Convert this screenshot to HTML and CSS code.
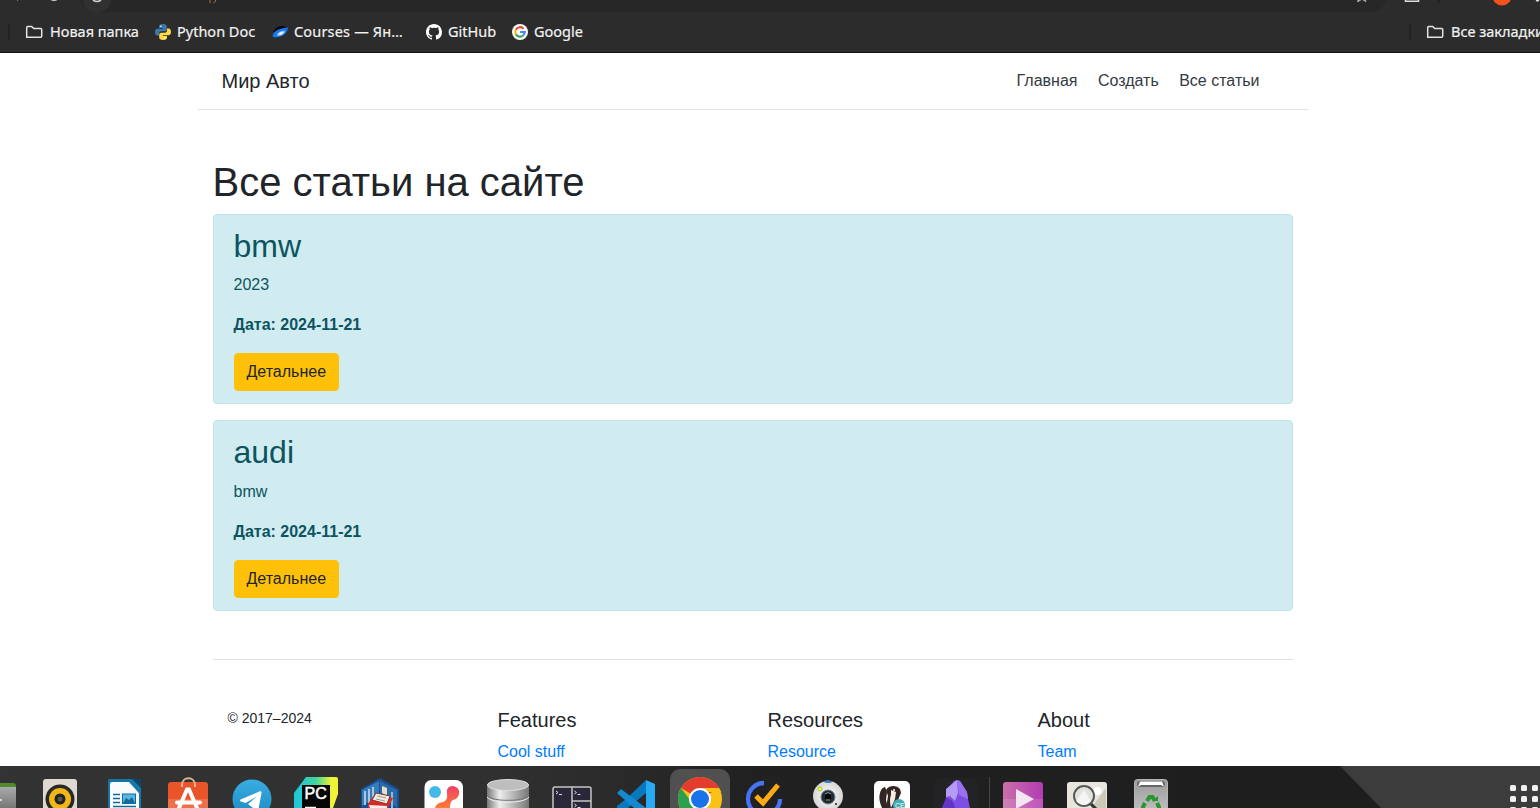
FILE: index.html
```html
<!DOCTYPE html>
<html lang="ru">
<head>
<meta charset="utf-8">
<title>Мир Авто</title>
<link rel="stylesheet" href="styles.css">
</head>
<body>
<div class="toolbar">
  <svg width="1540" height="12" viewBox="0 0 1540 12">
    <path d="M80 0H1386Q1382 12 1368 12H102Q84 12 80 0Z" fill="#272727"/>
    <path d="M83 0a14 12 0 0 0 28 0z" fill="#303030"/>
    <path d="M93 0q4 3 8 0" fill="none" stroke="#d0d0d0" stroke-width="1.6"/>
    <path d="M51 0q3 1.400 6 0" fill="#ddd" stroke="#ddd" stroke-width=".6"/>
    <path d="M17.500 0v1" stroke="#777"/>
    <path d="M210 0v3M215.500 0v1.500l-2 1.500" stroke="#a2714d" fill="none"/>
    <path d="M1357.500 2l1-3M1366 2l-1-3M1358 1.500l4-2.500 4 2.500" stroke="#aaa" stroke-width="1.100" fill="none"/>
    <path d="M1405.500 0v1.200h13V0" stroke="#ddd" stroke-width="1.600" fill="none"/>
    <path d="M1438.500 0v3" stroke="#202020" stroke-width="2"/>
    <circle cx="1502" cy="-4" r="9.500" fill="#f4511e"/>
    <circle cx="1537.500" cy="0" r="1.800" fill="#ddd"/>
  </svg>
</div>
<div class="bookmarks">
  <i class="divider"></i>
  <span class="mark folder"><svg width="18" height="16" viewBox="0 0 18 16"><path d="M1.700 13.200V3.500q0-1 1-1h4l2 2h7q1 0 1 1v6.700q0 1-1 1h-13z" fill="none" stroke="#e3e3e3" stroke-width="1.500"/></svg><b class="t1">Новая папка</b></span>
  <span class="mark python"><svg width="16" height="16" viewBox="0 0 16 16"><path d="M7.800 0C4.800 0 4 1.200 4 2.500V4h4v.8H2.300C.8 4.800 0 6.200 0 8s.8 3.500 2.200 3.500H4V9.600c0-1.300 1-2.300 2.300-2.300h3.600c1 0 1.900-.8 1.900-1.900V2.500C11.800 1 10.600 0 7.800 0z" fill="#3d78aa"/><path d="M8.200 16c3 0 3.800-1.200 3.800-2.500V12H8v-.8h5.700c1.500 0 2.300-1.400 2.300-3.200s-.8-3.500-2.200-3.500H12v1.900c0 1.300-1 2.300-2.300 2.300H6.100c-1 0-1.900.8-1.900 1.900v2.900C4.200 15 5.400 16 8.200 16z" fill="#ffd945"/><circle cx="5.900" cy="2.200" r=".8" fill="#fff"/><circle cx="10" cy="13.800" r=".8" fill="#fff"/></svg><b class="t2">Python Doc</b></span>
  <span class="mark courses"><svg width="17" height="16" viewBox="0 0 17 16"><defs><radialGradient id="ya"><stop offset=".2" stop-color="#fff"/><stop offset="1" stop-color="#1479ef"/></radialGradient></defs><path d="M1 8Q4 2 10 2q4 0 5 3z" fill="#060606"/><path d="M16 3.500Q16 9.500 8 12.500 1 14.500 .5 12 2 6.500 8 5 12 3.500 16 3.500z" fill="#1479ef"/><ellipse cx="9" cy="9.300" rx="5.500" ry="2.400" transform="rotate(-27 9 9.300)" fill="url(#ya)"/></svg><b class="t3">Courses — Ян…</b></span>
  <span class="mark github"><svg width="16" height="16" viewBox="0 0 16 16"><path fill="#fff" d="M8 0C3.580 0 0 3.580 0 8c0 3.540 2.290 6.530 5.470 7.590.4.070.55-.17.55-.38 0-.19-.01-.82-.01-1.490-2.010.37-2.530-.49-2.690-.94-.09-.23-.48-.94-.82-1.130-.28-.15-.68-.52-.01-.53.63-.01 1.080.58 1.230.82.72 1.210 1.870.87 2.330.66.07-.52.28-.87.51-1.070-1.780-.2-3.640-.89-3.640-3.950 0-.87.31-1.590.82-2.150-.08-.2-.36-1.020.08-2.120 0 0 .67-.21 2.200.82.64-.18 1.320-.27 2-.27s1.360.09 2 .27c1.530-1.040 2.200-.82 2.200-.82.44 1.100.16 1.920.08 2.120.51.56.82 1.270.82 2.150 0 3.070-1.870 3.750-3.650 3.950.29.25.54.73.54 1.480 0 1.070-.01 1.930-.01 2.200 0 .21.15.46.55.38A8.010 8.010 0 0 0 16 8c0-4.420-3.580-8-8-8z"/></svg><b class="t4">GitHub</b></span>
  <span class="mark google"><svg width="16" height="16" viewBox="0 0 16 16"><circle cx="8" cy="8" r="8" fill="#fff"/><g fill="none" stroke-width="2.200"><path d="M11.500 4.700A4.700 4.700 0 0 0 3.900 5.700" stroke="#ea4335"/><path d="M3.900 5.700a4.700 4.700 0 0 0 0 4.600" stroke="#fbbc05"/><path d="M3.900 10.300a4.700 4.700 0 0 0 7.200 1.200" stroke="#34a853"/><path d="M11.100 11.500a4.700 4.700 0 0 0 1.600-3.500H8.200" stroke="#4285f4"/></g></svg><b class="t5">Google</b></span>
  <i class="divider last"></i>
  <span class="mark folder"><svg width="18" height="16" viewBox="0 0 18 16"><path d="M1.700 13.200V3.500q0-1 1-1h4l2 2h7q1 0 1 1v6.700q0 1-1 1h-13z" fill="none" stroke="#e3e3e3" stroke-width="1.500"/></svg><b class="t6">Все закладки</b></span>
</div>

<main class="page">
  <div class="container">
    <header class="site-header">
      <h5 class="brand">Мир Авто</h5>
      <nav class="site-nav">
        <a>Главная</a>
        <a>Создать</a>
        <a>Все статьи</a>
      </nav>
    </header>
    <div class="content">
      <h1>Все статьи на сайте</h1>
      <section class="alert">
        <h2>bmw</h2>
        <p>2023</p>
        <p><strong>Дата: 2024-11-21</strong></p>
        <a class="btn">Детальнее</a>
      </section>
      <section class="alert">
        <h2>audi</h2>
        <p>bmw</p>
        <p><strong>Дата: 2024-11-21</strong></p>
        <a class="btn">Детальнее</a>
      </section>
      <footer class="site-footer">
        <div class="copyright">© 2017–2024</div>
        <div><h5>Features</h5><a>Cool stuff</a></div>
        <div><h5>Resources</h5><a>Resource</a></div>
        <div><h5>About</h5><a>Team</a></div>
      </footer>
    </div>
  </div>
</main>

<div class="dock">
  <svg class="app" viewBox="0 0 64 42"><defs><linearGradient id="gr" x2="0" y2="1"><stop stop-color="#aaa"/><stop offset="1" stop-color="#777"/></linearGradient></defs><rect x="12" y="17" width="40" height="30" rx="3" fill="#4f8a2b"/><path d="M12 42V25h16l4-4h20v21z" fill="url(#gr)"/><path d="M34 34h4" stroke="#eee" stroke-width="1.500"/></svg>
  <svg class="app" viewBox="0 0 64 42"><rect x="15" y="13" width="34" height="40" rx="3" fill="#dedad2"/><circle cx="32" cy="33" r="14.500" fill="#282828"/><circle cx="32" cy="33" r="11" fill="#f1b717"/><circle cx="32" cy="33" r="5.500" fill="#222"/><circle cx="32" cy="33" r="2.500" fill="#555"/></svg>
  <svg class="app" viewBox="0 0 64 42"><path d="M16 42V15q0-2 2-2h31v29z" fill="#1474a8"/><path d="M18 42V18q0-2 2-2h17l10 11v15z" fill="#f7fafb"/><path d="M36 13h13v29h-2V27z" fill="#1679aa"/><path d="M40 13h9v9z" fill="#0d4668"/><path d="M21 28.500h7M21 32.500h7M21 36.500h7M21 40.500h23" stroke="#146b9a" stroke-width="1.500"/><rect x="30.500" y="28" width="13" height="9.500" fill="#58b8e5" stroke="#146b9a"/><path d="M31 37l3-5 3 2 3-3 3 6z" fill="#146b9a"/></svg>
  <svg class="app" viewBox="0 0 64 42"><rect x="12" y="16" width="40" height="40" rx="3" fill="#e95529"/><path d="M12 33h40v9H12z" fill="#ee704b"/><path d="M26 21v-2c0-9 13-9 13 0v2" fill="none" stroke="#ddb594" stroke-width="2"/><path d="M21 36.500h23M23 42l8-18.500h2L41 42" fill="none" stroke="#fff" stroke-width="4" stroke-linecap="round"/></svg>
  <svg class="app" viewBox="0 0 64 42"><defs><linearGradient id="tg" x2="0" y2="1"><stop stop-color="#37aee2"/><stop offset="1" stop-color="#1e87c2"/></linearGradient></defs><circle cx="32" cy="33" r="19.500" fill="url(#tg)"/><path d="M20.500 33.500L40 25.300q1.800-.5 1.500 1.500L38.700 42H33l-5-4 9-7.500L25.500 37l-5-1.800q-1-.8 0-1.700z" fill="#fff"/></svg>
  <svg class="app" viewBox="0 0 64 42"><defs><linearGradient id="pc" x2="1" y2="0"><stop stop-color="#18c7e0"/><stop offset=".5" stop-color="#40d49b"/><stop offset=".85" stop-color="#f0f336"/></linearGradient></defs><path d="M10 27l12-16h30q2 0 2 2v15l-5 14H10z" fill="url(#pc)"/><path d="M18 19h28v23H18z" fill="#050505"/><text x="20.500" y="33" class="pc">PC</text><path d="M21 41.500h11" stroke="#fff" stroke-width="1.500"/></svg>
  <svg class="app" viewBox="0 0 64 42"><path d="M32 12l19 11v19H13V23z" fill="#164e93"/><path d="M14 24l17-9v14L14 40z" fill="#347dbd"/><path d="M32 15l17 9v18l-17-14z" fill="#2b6aa4"/><path d="M17 25v14M21 23v14M25 21v13" stroke="#d1dfe8" stroke-width="1.500"/><path d="M34 20l5 2v8l-5-3z" fill="#e4dfcf"/><path d="M44 26v16" stroke="#8db9dd" stroke-width="2"/><path d="M20 38l6-9 19 3-5 10H20z" fill="#d82c22"/><path d="M24 34l4-7 14 3-3 8z" fill="#f0eee4" stroke="#8f3328"/><path d="M29 30l9 2M28 33l9 2" stroke="#999"/><path d="M21 39l18 1v2H22z" fill="#eee"/></svg>
  <svg class="app" viewBox="0 0 64 42"><defs><linearGradient id="or" x2="0" y2="1"><stop stop-color="#ee4067"/><stop offset="1" stop-color="#ff7b35"/></linearGradient></defs><rect x="12.500" y="14" width="38.500" height="40" rx="7" fill="#fff"/><circle cx="23" cy="26" r="6" fill="#45b9e8"/><path d="M23 42q1-5 8-6 5-1 4-9-1-7 6-7 7 1 6 8-1 5-6 6-3 1-3 8z" fill="url(#or)"/></svg>
  <svg class="app" viewBox="0 0 64 42"><defs><linearGradient id="db"><stop stop-color="#777"/><stop offset=".3" stop-color="#eee"/><stop offset="1" stop-color="#777"/></linearGradient></defs><path d="M11 19v23h42V19z" fill="url(#db)"/><path d="M11 29c5 7 37 7 42 0M11 41c5 5 37 5 42 0" fill="none" stroke="#777" stroke-width="1.200"/><path d="M11 31c5 7 37 7 42 0" fill="none" stroke="#eee"/><ellipse cx="32" cy="19" rx="20.500" ry="5.500" fill="#bebebe" stroke="#ddd"/></svg>
  <svg class="app" viewBox="0 0 64 42"><rect x="13" y="21" width="38" height="30" rx="2" fill="#2b273b" stroke="#c8c5c2" stroke-width="1.500"/><path d="M32 21v21M32 35h19" stroke="#c8c5c2" stroke-width="1.500"/><path d="M16 25l2 1.500-2 1.500M19 28.500h3M34.500 25l2 1.500-2 1.500M37.500 28.500h3M34.500 38l2 1.500-2 1.500M37.500 41.500h3" fill="none" stroke="#ddd"/></svg>
  <svg class="app" viewBox="0 0 64 42"><path d="M42 14L22 33l-9 7v2h11l18-15z" fill="#0879bc"/><path d="M13 27l4-4 25 19H30z" fill="#1489d0"/><path d="M42 14l9 4v24h-9z" fill="#28a9f1"/></svg>
  <svg class="app" viewBox="0 0 64 42"><rect x="2" y="3" width="60" height="60" rx="10" fill="#505050"/><circle cx="32" cy="33" r="22" fill="#fbc116"/><path d="M32 33L13 22a22 22 0 0 1 38 0z" fill="#e33b2e"/><path d="M13 22a22 22 0 0 0-1 20h16z" fill="#2da04e"/><path d="M32 22h19a22 22 0 0 1 2 4H32z" fill="#fbc116"/><circle cx="32" cy="33" r="11" fill="#fff"/><circle cx="32" cy="33" r="9" fill="#1a73e8"/></svg>
  <svg class="app" viewBox="0 0 64 42"><path d="M32 17A16 16 0 1 0 48 33" fill="none" stroke="#4774f5" stroke-width="4.300"/><path d="M24 30l7 7 15-18" fill="none" stroke="#ffac12" stroke-width="5"/></svg>
  <svg class="app" viewBox="0 0 64 42"><defs><radialGradient id="cam"><stop stop-color="#fff"/><stop offset="1" stop-color="#d5d5d5"/></radialGradient></defs><circle cx="32" cy="30" r="15" fill="url(#cam)"/><path d="M27.500 16q4.500-4 9 0-4 2-9 0z" fill="#3775bb"/><circle cx="24" cy="23" r="2" fill="#eefa9a" stroke="#a7cf00"/><circle cx="32" cy="31" r="7" fill="#242d36" stroke="#77818a"/><ellipse cx="32" cy="31" rx="3" ry="4.500" fill="#07090c"/><path d="M29 28q3-3 6 0" fill="none" stroke="#7ba0b9"/><path d="M30 34h4" stroke="#c8b65b"/><circle cx="40" cy="38" r="1" fill="#222"/></svg>
  <svg class="app" viewBox="0 0 64 42"><rect x="14" y="15" width="36" height="40" rx="5" fill="#fff"/><path d="M22 42q-4-9-2-15 1-5 5-6l2 5-1 8 2 8z" fill="#332521"/><path d="M26 42l2-12-2-6q2-4 8-4 7 1 7 7l-3 7v8z" fill="#332521"/><path d="M31 24l5 2-1 7-4 9q-2-9 0-13z" fill="#f3ebe2"/><circle cx="34" cy="24" r="1" fill="#fff"/><circle cx="39" cy="39" r="6" fill="#42acb2"/><text x="35" y="42" class="ce">CE</text></svg>
  <svg class="app" viewBox="0 0 64 42"><rect x="10" y="12" width="44" height="44" rx="7" fill="#232224"/><path d="M22 24l8-9 3-1 3 1 7 11 1 7 2 9H18l4-9z" fill="#7e4de3"/><path d="M33 14l-11 9v8l4-1 5 5 3-8z" fill="#b59bf5"/><path d="M33 14l3 1 7 11 1 7-9-4z" fill="#9971ee"/><path d="M18 42l4-10q7 0 9 10z" fill="#6334c7"/></svg>
  <i class="dock-separator"></i>
  <svg class="app" viewBox="0 0 64 42"><defs><linearGradient id="vid"><stop stop-color="#c870a9"/><stop offset="1" stop-color="#b43cb3"/></linearGradient></defs><rect x="12" y="16" width="40" height="40" rx="3" fill="url(#vid)"/><path d="M12 33h40v9H12z" fill="#fff" opacity=".13"/><path d="M25 23v20l18-10z" fill="#f4e6f2"/></svg>
  <svg class="app" viewBox="0 0 64 42"><rect x="12" y="16" width="40" height="40" rx="3" fill="#e8e6dc"/><path d="M36 42l15-20v20z" fill="#ccc9b7"/><circle cx="42.500" cy="25" r="4" fill="#fff"/><circle cx="29" cy="30" r="10" fill="#e2e2de" stroke="#55595a" stroke-width="2"/><path d="M21 35l8-11 7 11q-7 8-15 0z" fill="#f5f5f2"/><path d="M36 38l5 5" stroke="#333" stroke-width="3"/></svg>
  <svg class="app" viewBox="0 0 64 42"><defs><linearGradient id="tr" x2="0" y2="1"><stop stop-color="#9b9b9b"/><stop offset="1" stop-color="#c8c8c8"/></linearGradient></defs><rect x="15.500" y="13.500" width="33" height="40" rx="3" fill="url(#tr)" stroke="#b5b5b5"/><rect x="18" y="15" width="28" height="6" rx="3" fill="#666"/><path d="M19 20.500l2-5h22l2 5-3-1.500H22z" fill="#fff"/><path d="M28 35l2.500-4h3L36 35M26 37l-2 4 2 4M38 37l2 4-2 4" fill="none" stroke="#299632" stroke-width="4"/><path d="M33 35h6v-5z" fill="#299632"/></svg>
  <svg class="launcher" viewBox="0 0 34 42"><g fill="#f0f0f0"><rect x="4" y="19" width="6" height="6" rx="1.500"/><rect x="15" y="19" width="6" height="6" rx="1.500"/><rect x="26" y="19" width="6" height="6" rx="1.500"/><rect x="4" y="30" width="6" height="6" rx="1.500"/><rect x="15" y="30" width="6" height="6" rx="1.500"/><rect x="26" y="30" width="6" height="6" rx="1.500"/><rect x="4" y="41" width="6" height="6" rx="1.500"/><rect x="15" y="41" width="6" height="6" rx="1.500"/><rect x="26" y="41" width="6" height="6" rx="1.500"/></g></svg>
</div>
</body>
</html>
```
FILE: styles.css
```css
* { box-sizing: border-box; }
body {
  display: flex;
  flex-direction: column;
  height: 808px;
  margin: 0;
  overflow: hidden;
  background: #fff;
  color: #212529;
  font: 16px/1.5 "Liberation Sans", Arial, sans-serif;
}
h1, h2, h5 { margin: 0 0 8px; font-weight: 400; line-height: 1.2; }
h1 { font-size: 40px; }
h2 { font-size: 32px; }
h5 { font-size: 20px; }
p { margin: 0 0 16px; }

.toolbar { height: 12px; flex: none; background: #2c2c2c; }
.toolbar svg { display: block; }
.bookmarks {
  display: flex;
  flex: none;
  align-items: center;
  height: 41px;
  padding-left: 8px;
  overflow: hidden;
  border-bottom: 1px solid #171214;
  background: #2c2c2c;
  color: #f2f2f2;
}
.divider { flex: none; width: 2px; height: 16px; margin-right: 15px; background: #222; }
.divider.last { margin-left: auto; }
.mark {
  display: flex;
  flex: none;
  align-items: center;
  font: 14.5px/20px "Noto Sans", "Open Sans", sans-serif;
}
.mark b {
  padding-bottom: 2px;
  font-weight: 400;
  white-space: nowrap;
  -webkit-text-stroke: 0.2px #f2f2f2;
}
.mark svg { flex: none; }
.folder b { margin-left: 7px; }
.python { margin-left: 17px; }
.python b { margin-left: 6px; }
.courses { margin-left: 16px; }
.courses b { margin-left: 5px; }
.github { margin-left: 18px; }
.github b { margin-left: 6px; }
.google { margin-left: 16px; }
.google b { margin-left: 6px; }
.t1 { width: 88px; }
.t2 { width: 79px; }
.t3 { width: 114px; letter-spacing: 0.18px; }
.t4 { width: 48px; }
.t5 { width: 49px; }
.t6 { width: 89px; }

.page { flex: 1; min-height: 0; overflow: hidden; }
.container { width: 1110px; margin-left: 197.5px; }
.site-header {
  display: flex;
  align-items: center;
  height: 57px;
  margin-bottom: 48px;
  padding: 16px 24px;
  border-bottom: 1px solid #dee2e6;
}
.brand { margin: 0 auto 0 0; }
.site-nav { margin-right: 16px; }
.site-nav a { padding: 8px; color: #343a40; }
.content { padding: 0 15px; }
.alert {
  margin-bottom: 16px;
  padding: 12px 20px;
  border: 1px solid #bee5eb;
  border-radius: 4px;
  background: #d1ecf1;
  color: #0c5460;
}
.btn {
  display: block;
  width: fit-content;
  padding: 6px 12px;
  border: 1px solid #ffc107;
  border-radius: 4px;
  background: #ffc107;
  color: #212529;
}
.site-footer {
  display: grid;
  grid-template-columns: repeat(4, 270px);
  margin-top: 48px;
  padding-top: 48px;
  border-top: 1px solid #dee2e6;
}
.site-footer > div { padding: 0 15px; }
.site-footer a { color: #007bff; }
.site-footer .copyright { font-size: 14px; }

.dock {
  position: relative;
  display: flex;
  flex: none;
  height: 42px;
  overflow: hidden;
  background: linear-gradient(90deg, #333 0, #303030 500px, #292929 640px, #212121 740px, #1e1e1e 1300px);
}
.dock::before {
  content: "";
  position: absolute;
  inset: 0 0 0 1340px;
  background: #3c3c3c;
  clip-path: polygon(0 0, 100% 0, 100% 100%, 41px 100%);
}
.app { flex: none; width: 64px; height: 42px; }
.app:first-child { margin-left: -36px; }
.dock-separator { flex: none; width: 1px; height: 31px; margin: 11px 1px 0; background: #444; }
.launcher { position: relative; width: 34px; height: 42px; margin-left: auto; flex: none; }
.pc { fill: #fff; stroke: #fff; stroke-width: 0.5px; font: 16px "Liberation Sans", Arial, sans-serif; }
.ce { fill: #fff; font: 7px "Liberation Sans", Arial, sans-serif; }
```
